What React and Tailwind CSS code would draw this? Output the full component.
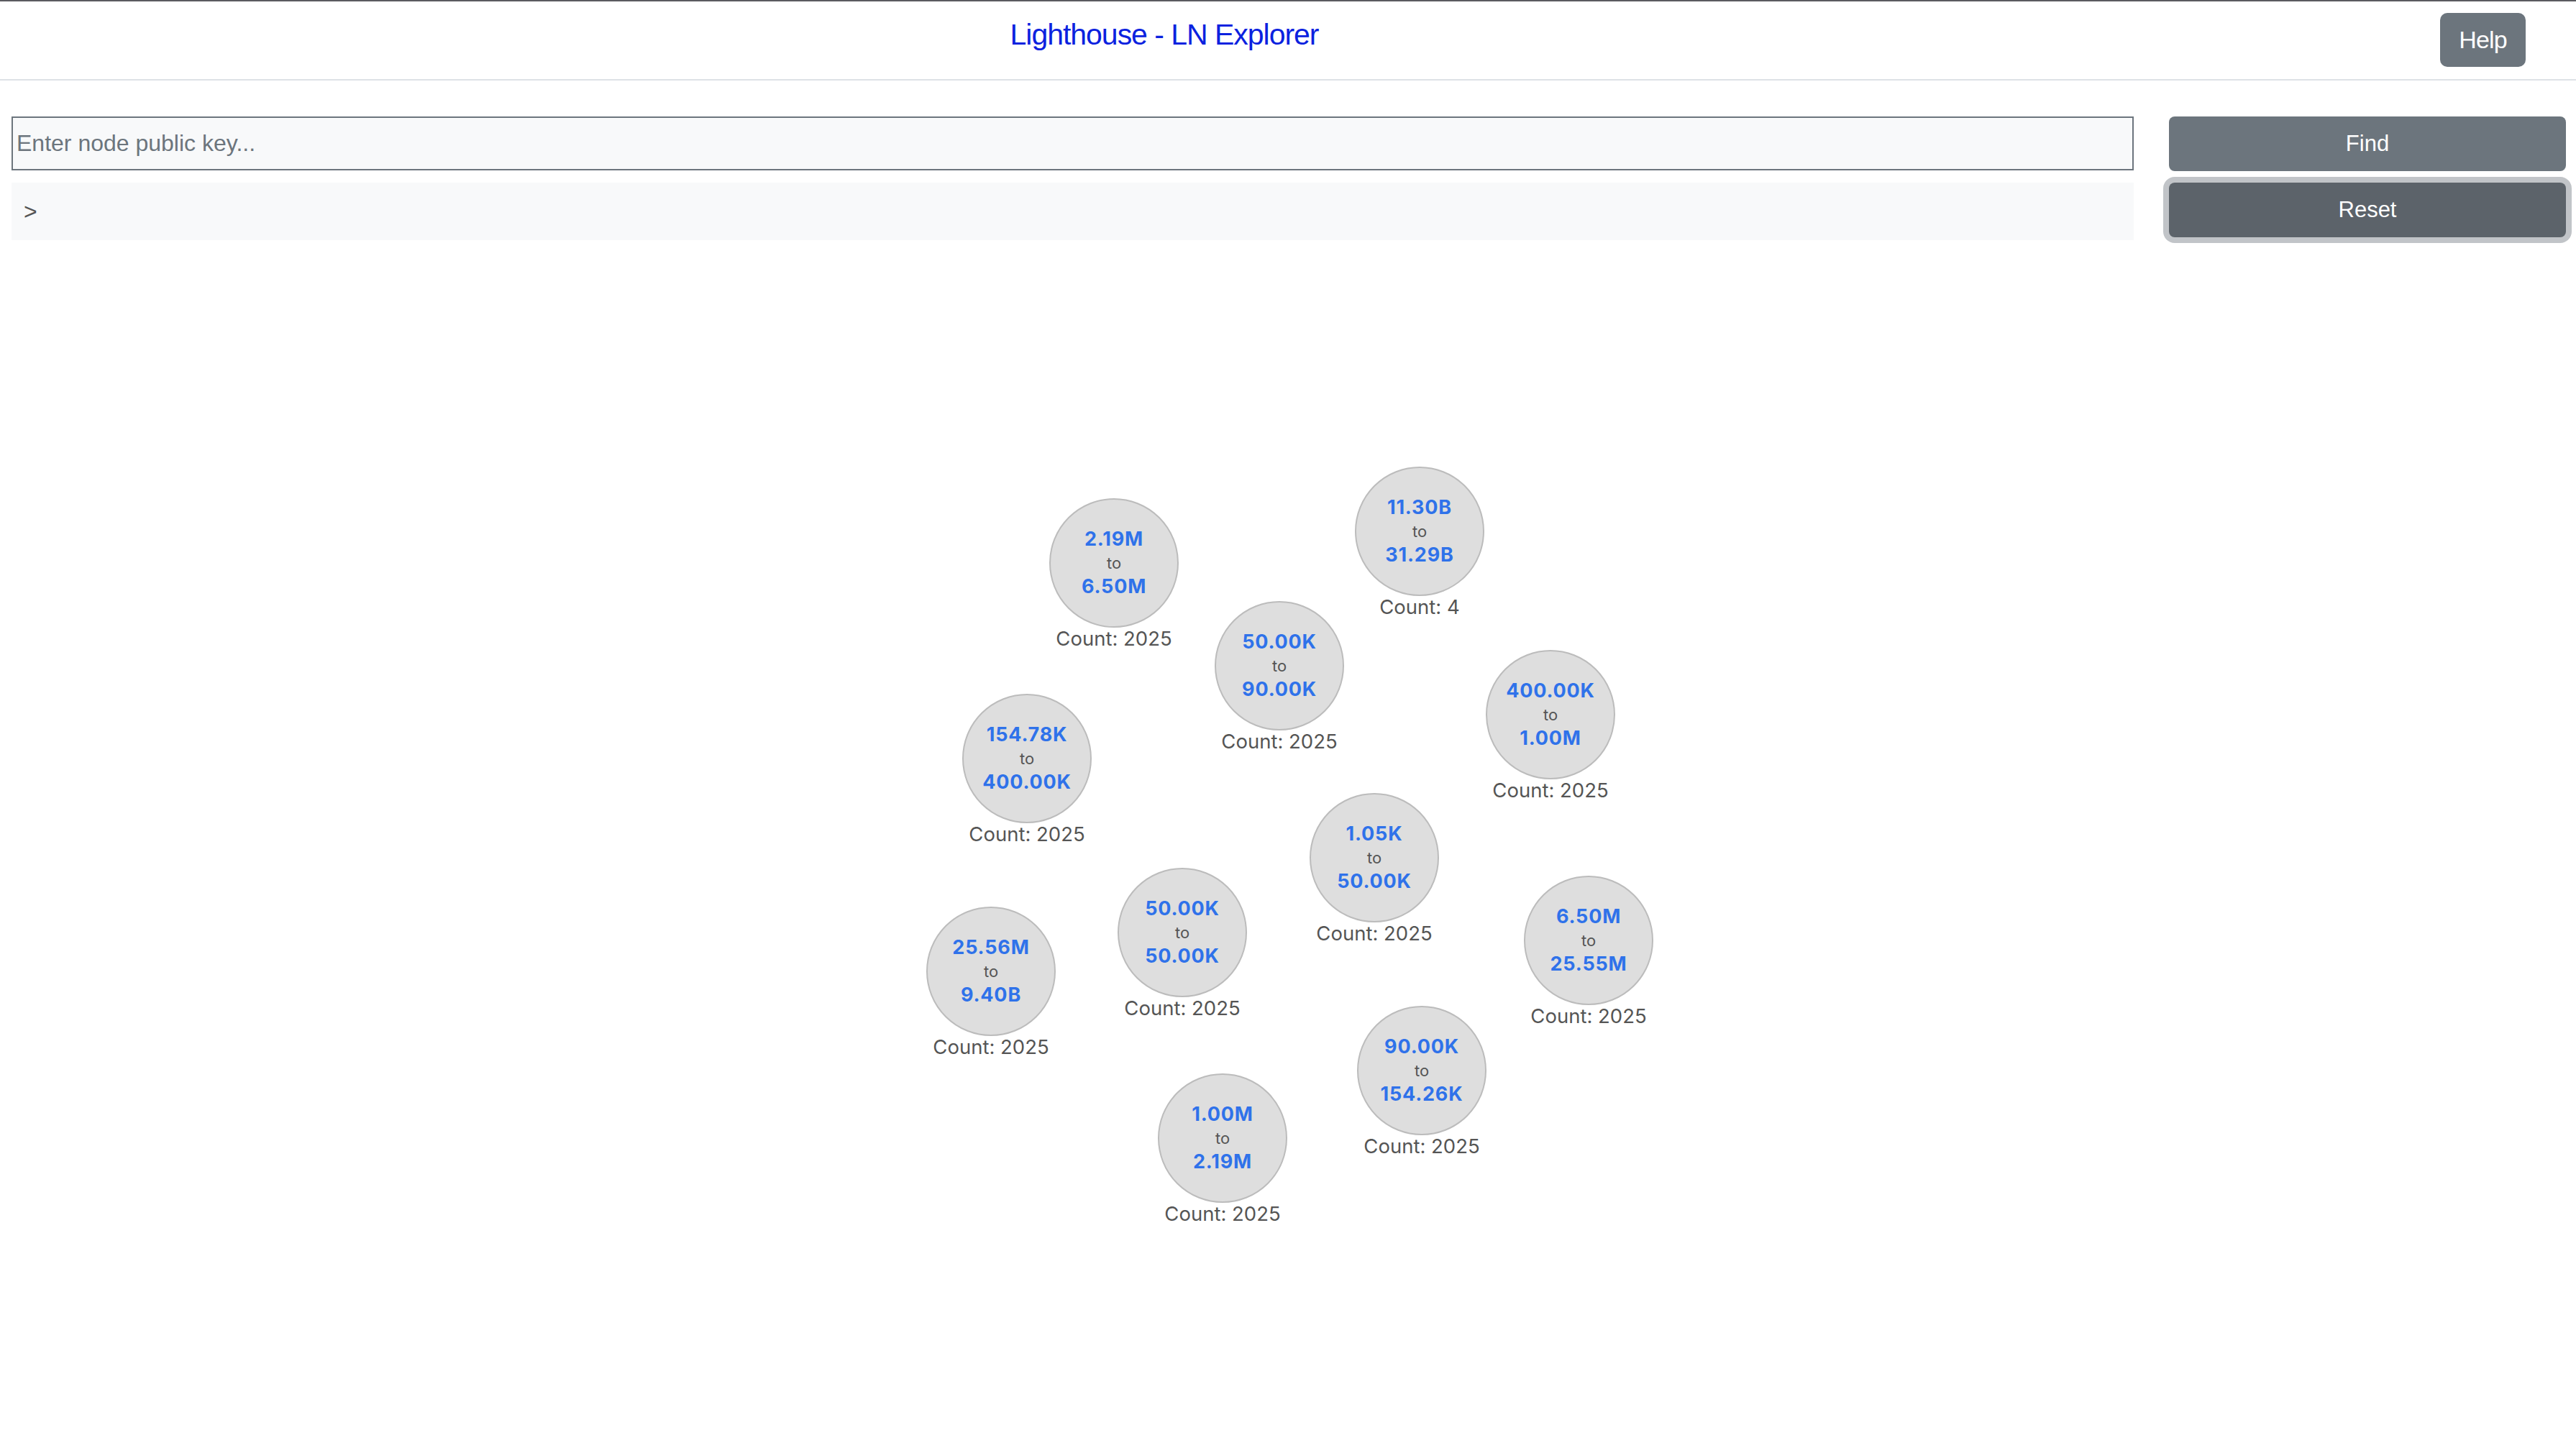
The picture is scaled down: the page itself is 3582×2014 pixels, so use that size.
import React, { useState } from "react";

// bucket nodes: centre of each circle on the page, and its range
const NODES = [
  { id: 1,  x: 1549,  y: 783,  from: "2.19M",   to: "6.50M",   count: 2025 },
  { id: 2,  x: 1974,  y: 739,  from: "11.30B",  to: "31.29B",  count: 4 },
  { id: 3,  x: 1779,  y: 926,  from: "50.00K",  to: "90.00K",  count: 2025 },
  { id: 4,  x: 2156,  y: 994,  from: "400.00K", to: "1.00M",   count: 2025 },
  { id: 5,  x: 1428,  y: 1055, from: "154.78K", to: "400.00K", count: 2025 },
  { id: 6,  x: 1911,  y: 1193, from: "1.05K",   to: "50.00K",  count: 2025 },
  { id: 7,  x: 1644,  y: 1297, from: "50.00K",  to: "50.00K",  count: 2025 },
  { id: 8,  x: 2209,  y: 1308, from: "6.50M",   to: "25.55M",  count: 2025 },
  { id: 9,  x: 1378,  y: 1351, from: "25.56M",  to: "9.40B",   count: 2025 },
  { id: 10, x: 1977,  y: 1489, from: "90.00K",  to: "154.26K", count: 2025 },
  { id: 11, x: 1700,  y: 1583, from: "1.00M",   to: "2.19M",   count: 2025 },
];

const CANVAS_TOP = 350;
const R = 90;

function Bucket({ node }) {
  return (
    <div
      className="absolute w-[180px] flex flex-col items-center font-['Inter',sans-serif]"
      style={{ left: node.x - R, top: node.y - R - CANVAS_TOP }}
    >
      <div className="w-[180px] h-[180px] rounded-full bg-[#dedede] border-2 border-[#bcbcbc] flex flex-col items-center justify-center">
        <span className="text-[27px] leading-[34px] font-bold text-[#2f72ea] tracking-[0.03em] whitespace-nowrap">{node.from}</span>
        <span className="text-[22px] leading-[32px] text-[#555]">to</span>
        <span className="text-[27px] leading-[34px] font-bold text-[#2f72ea] tracking-[0.03em] whitespace-nowrap">{node.to}</span>
      </div>
      <span className="text-[27.5px] leading-[30px] text-[#555] whitespace-nowrap">Count: {node.count}</span>
    </div>
  );
}

export default function App() {
  const [key, setKey] = useState("");

  return (
    <div className="min-h-screen bg-white border-t-2 border-[#5b5b60] font-['Liberation_Sans',Arial,sans-serif]">
      {/* Header */}
      <div className="flex items-start h-[110px] border-b-2 border-[#dee2e6]">
        <div className="flex-1 flex justify-center pt-[26px]">
          <h1 className="text-[41px] leading-none tracking-tight text-[#0b22df]">Lighthouse - LN Explorer</h1>
        </div>
        <button className="mt-[16px] ml-[155px] mr-[70px] w-[119px] h-[75px] rounded-[10px] bg-[#6c757d] text-white text-[34px] tracking-tight">
          Help
        </button>
      </div>

      {/* Search */}
      <div className="pt-[50px] pl-[16px] pr-[14px] flex flex-col gap-[16px]">
        <div className="flex gap-[49px]">
          <input
            type="text"
            value={key}
            onChange={e => setKey(e.target.value)}
            placeholder="Enter node public key..."
            className="flex-1 h-[75px] border-2 border-[#6c757d] bg-[#f8f9fa] px-[5px] text-[32px] text-[#333] placeholder-[#6c757d] focus:outline-none"
          />
          <button className="w-[552px] h-[76px] rounded-[8px] bg-[#6c757d] text-white text-[31px]">Find</button>
        </div>
        <div className="flex gap-[49px]">
          <div className="flex-1 h-[80px] bg-[#f8f9fa] flex items-center pl-[17px] text-[32px] text-[#555]">&gt;</div>
          <button className="w-[552px] h-[76px] rounded-[8px] bg-[#5c636a] text-white text-[31px] ring-8 ring-[#c1c4c8]">Reset</button>
        </div>
      </div>

      {/* Bucket canvas */}
      <div className="relative mt-[16px] h-[1660px]">
        {NODES.map(n => <Bucket key={n.id} node={n} />)}
      </div>
    </div>
  );
}
